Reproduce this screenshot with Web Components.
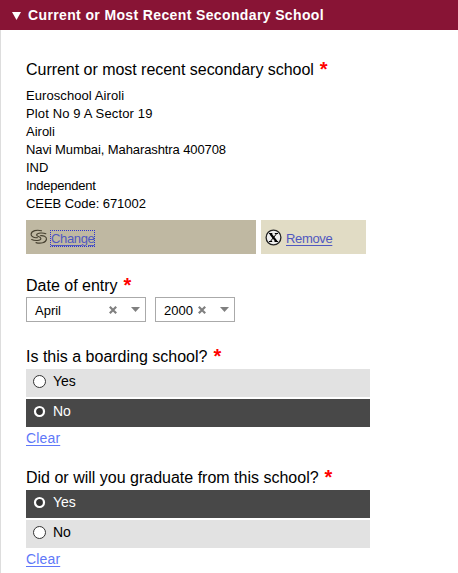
<!DOCTYPE html>
<html lang="en">
<head>
<meta charset="utf-8">
<title>Secondary School</title>
<style>
  body {
    margin: 0;
    background: #fff;
    color: #000;
    font-family: "Liberation Sans", Arial, sans-serif;
    font-size: 14px;
  }
</style>
</head>
<body>
<form-section heading="Current or Most Recent Secondary School">
  <form-question label="Current or most recent secondary school" style="--track: -0.03px">
    <school-address>
      <address-line track="0.08">Euroschool Airoli</address-line>
      <address-line track="0.14">Plot No 9 A Sector 19</address-line>
      <address-line>Airoli</address-line>
      <address-line track="-0.1">Navi Mumbai, Maharashtra 400708</address-line>
      <address-line>IND</address-line>
      <address-line track="-0.25">Independent</address-line>
      <address-line track="-0.05">CEEB Code: 671002</address-line>
    </school-address>
    <button-row>
      <action-button icon="change" focused style="width: 230px">Change</action-button>
      <action-button icon="remove" style="width: 105px">Remove</action-button>
    </button-row>
  </form-question>
  <form-question label="Date of entry" style="--label-top: 1px; --label-bottom: 1px; padding-bottom: 4px">
    <button-row style="--row-gap: 9px">
      <select-box value="April" style="width: 120px"></select-box>
      <select-box value="2000" style="width: 80px"></select-box>
    </button-row>
  </form-question>
  <form-question label="Is this a boarding school?">
    <radio-list options="Yes,No" value="No"></radio-list>
  </form-question>
  <form-question label="Did or will you graduate from this school?">
    <radio-list options="Yes,No" value="Yes"></radio-list>
  </form-question>
</form-section>

<script>
class FormSection extends HTMLElement {
  connectedCallback() {
    this.attachShadow({ mode: 'open' }).innerHTML = `
      <style>
        :host { display: flex; flex-direction: column; height: 573px; overflow: hidden; }
        header {
          display: flex;
          flex: none;
          box-sizing: border-box;
          align-items: center;
          height: 30px;
          padding-left: 12px;
          gap: 7px;
          background: #881435;
          color: #fff;
          font-size: 14px;
          font-weight: bold;
          letter-spacing: 0.37px;
          white-space: nowrap;
        }
        svg { margin-top: 2px; }
        .body {
          display: flex;
          flex: 1;
          flex-direction: column;
          gap: 21px;
          border-left: 1px solid #ddd;
          padding: 30px 0 0 25px;
        }
      </style>
      <header>
        <svg width="9" height="8" viewBox="0 0 9 8"><path d="M0 0h9L4.5 8z" fill="#fff"/></svg>
        <span>${this.getAttribute('heading')}</span>
      </header>
      <div class="body"><slot></slot></div>
    `
  }
}

/** <form-question label> — required question with its answer in the slot */
class FormQuestion extends HTMLElement {
  connectedCallback() {
    this.attachShadow({ mode: 'open' }).innerHTML = `
      <style>
        :host { display: block; }
        .label {
          display: flex;
          height: 20px;
          line-height: 20px;
          font-size: 16px;
          gap: 6px;
          padding-top: var(--label-top, 0);
          padding-bottom: var(--label-bottom, 2px);
          white-space: nowrap;
        }
        .text { letter-spacing: var(--track, 0); }
        .star { color: #f00; font-size: 20px; font-weight: bold; line-height: 18px; }
      </style>
      <div class="label"><span class="text">${this.getAttribute('label')}</span><span class="star">*</span></div>
      <slot></slot>
    `
  }
}

/** <school-address> — stack of address lines */
class SchoolAddress extends HTMLElement {
  connectedCallback() {
    this.attachShadow({ mode: 'open' }).innerHTML = `
      <style>
        :host {
          display: flex;
          flex-direction: column;
          font-size: 13px;
          line-height: 18px;
          padding: 5px 0 7px;
        }
      </style>
      <slot></slot>
    `
  }
}

/** <address-line track> — one line, track is its letter spacing in px */
class AddressLine extends HTMLElement {
  connectedCallback() {
    this.attachShadow({ mode: 'open' }).innerHTML = `
      <style>
        :host {
          display: block;
          white-space: nowrap;
          letter-spacing: ${this.getAttribute('track') || 0}px;
        }
      </style>
      <slot></slot>
    `
  }
}

/** <button-row> — lays its children side by side */
class ButtonRow extends HTMLElement {
  connectedCallback() {
    this.attachShadow({ mode: 'open' }).innerHTML = `
      <style>
        :host { display: flex; gap: var(--row-gap, 5px); }
      </style>
      <slot></slot>
    `
  }
}

const ICONS = {
  change: `
    <svg width="18" height="16" viewBox="0 0 18 16" fill="none" stroke="#464030" stroke-width="1.1" stroke-linecap="round">
      <path d="M11.500 1.800C7 .4 1.400 1.600 1.100 5.200.9 8 4.500 9 7.300 8.600"/>
      <path d="M15.800 4.700C13.500 3.600 7.300 3.500 6.600 5.800 6.100 7.700 10.900 7.400 10.900 9.600 10.900 11.900 4.500 11.900 1.700 10.500"/>
      <path d="M10.300 6.700C13.200 6.300 16.700 7.400 16.500 10.100 16.200 13.700 10.500 14.900 6 13.600"/>
    </svg>`,
  remove: `
    <svg width="17" height="17" viewBox="0 0 17 17">
      <circle cx="8.500" cy="8.500" r="7.400" fill="#eee" stroke="#222" stroke-width="1.300"/>
      <path d="M5.400 4.700l6 7.700" stroke="#000" stroke-width="2.200"/>
      <path d="M11.600 4.700l-6.200 7.700M4 4.500h3.300M9.800 4.500H13M4 12.500h3.200M9.500 12.500H13" stroke="#000" stroke-width="1"/>
    </svg>`
}

/** <action-button icon focused> — flat button with an icon and a link */
class ActionButton extends HTMLElement {
  connectedCallback() {
    this.attachShadow({ mode: 'open' }).innerHTML = `
      <style>
        :host {
          display: flex;
          box-sizing: border-box;
          align-items: center;
          height: 34px;
          padding: 0 0 0 4px;
          gap: 4px;
          background: #e1dcc5;
        }
        :host([focused]) { background: #bfb8a2; gap: 3px; }
        svg { display: block; }
        a {
          color: #5058c0;
          font-size: 13px;
          line-height: 15px;
          letter-spacing: -0.35px;
          text-decoration: underline;
          text-underline-offset: 2px;
          margin-top: 3px;
        }
        :host([focused]) a { outline: 1px dotted #2d35d0; }
      </style>
      ${ICONS[this.getAttribute('icon')]}
      <a><slot></slot></a>
    `
  }
}

/** <select-box value> — closed dropdown with a clear mark and an arrow */
class SelectBox extends HTMLElement {
  connectedCallback() {
    this.attachShadow({ mode: 'open' }).innerHTML = `
      <style>
        :host {
          display: flex;
          box-sizing: border-box;
          align-items: center;
          height: 25px;
          padding: 0 5px 0 8px;
          border: 1px solid #aaa;
          font-size: 13px;
        }
        span { flex: 1; padding-top: 2px; }
        .clear { margin-right: 14px; }
      </style>
      <span>${this.getAttribute('value')}</span>
      <svg class="clear" width="8" height="8" viewBox="0 0 8 8"><path d="M.8.800l6.400 6.400M7.200.8L.8 7.200" stroke="#808080" stroke-width="2.200"/></svg>
      <svg width="9" height="5" viewBox="0 0 9 5"><path d="M0 0h9L4.500 5z" fill="#808080"/></svg>
    `
  }
}

/** <radio-list options value> — stacked radio rows and a clear link */
class RadioList extends HTMLElement {
  connectedCallback() {
    const value = this.getAttribute('value')
    const rows  = this.getAttribute('options').split(',').map((option) => {
      const checked = option === value
      const dot = checked
        ? '<circle cx="6.5" cy="6.5" r="4.5" fill="#333" stroke="#fff" stroke-width="2.2"/>'
        : '<circle cx="6.5" cy="6.5" r="6" fill="#fff" stroke="#333"/>'
      return `
        <div class="row ${checked ? 'checked' : ''}">
          <svg width="13" height="13" viewBox="0 0 13 13">${dot}</svg>
          <span>${option}</span>
        </div>`
    }).join('')

    this.attachShadow({ mode: 'open' }).innerHTML = `
      <style>
        :host { display: block; width: 344px; }
        .row {
          display: flex;
          box-sizing: border-box;
          align-items: center;
          height: 28px;
          margin-bottom: 2px;
          padding: 0 0 4px 7px;
          gap: 7px;
          background: #e2e2e2;
        }
        .checked { background: #484848; color: #fff; }
        a {
          display: block;
          line-height: 18px;
          letter-spacing: 0.15px;
          color: #6078f8;
          text-decoration: underline;
          text-underline-offset: 2px;
        }
      </style>
      ${rows}
      <a>Clear</a>
    `
  }
}

customElements.define('form-section', FormSection)
customElements.define('form-question', FormQuestion)
customElements.define('school-address', SchoolAddress)
customElements.define('address-line', AddressLine)
customElements.define('button-row', ButtonRow)
customElements.define('action-button', ActionButton)
customElements.define('select-box', SelectBox)
customElements.define('radio-list', RadioList)
</script>
</body>
</html>
